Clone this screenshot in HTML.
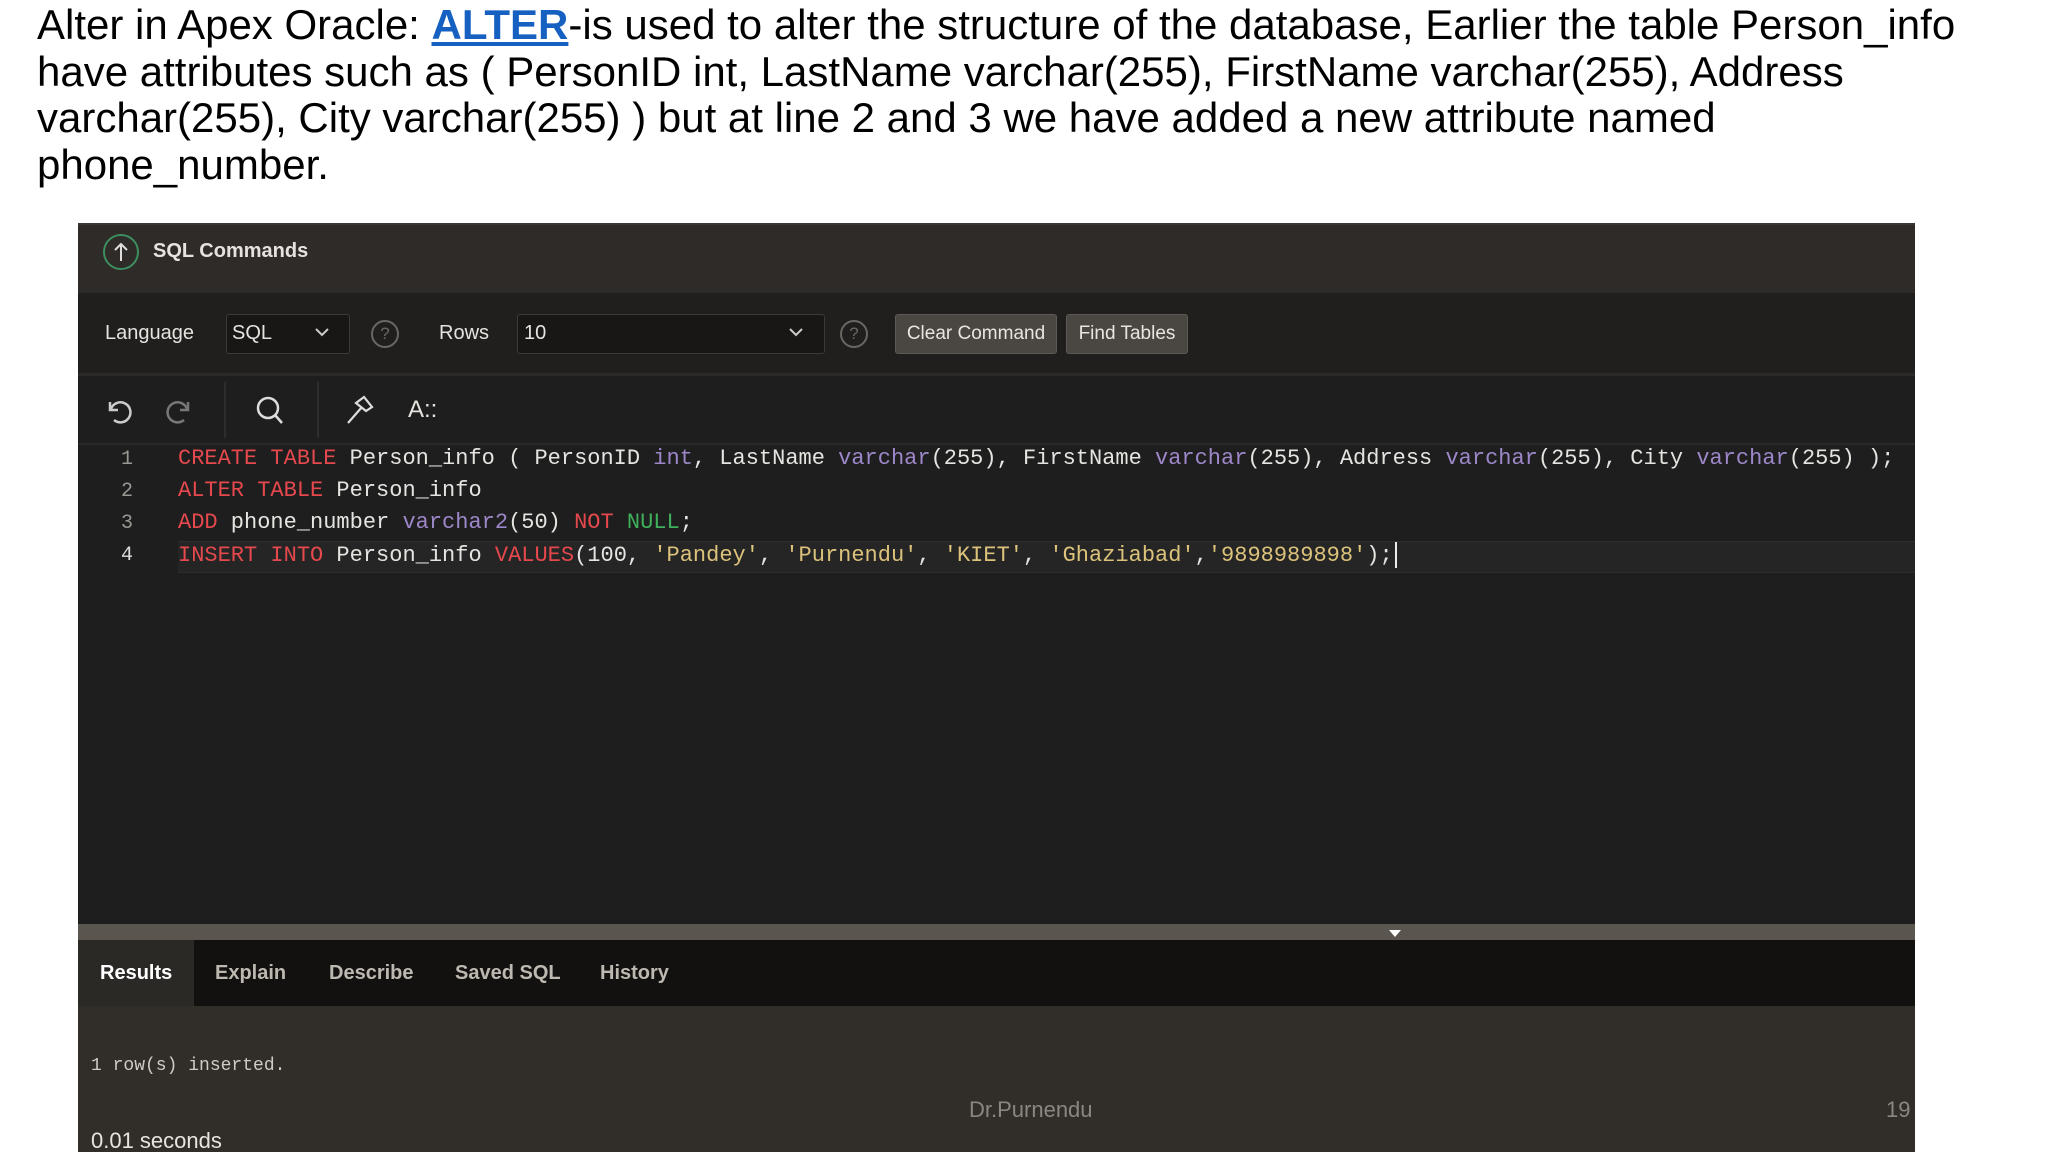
<!DOCTYPE html>
<html><head><meta charset="utf-8"><style>
*{margin:0;padding:0;box-sizing:border-box}
body{width:2048px;height:1152px;background:#fff;position:relative;overflow:hidden;font-family:"Liberation Sans",sans-serif}
.abs{position:absolute;white-space:nowrap}
#title{left:37px;top:2px;font-size:42px;line-height:46.5px;color:#000}
#title a{color:#1560c0;font-weight:bold;text-decoration:underline}
#panel{left:78px;top:223px;width:1837px;height:929px;background:#1e1e1e}
.code{font-family:"Liberation Mono",monospace;font-size:22px;letter-spacing:0;color:#e6e4e0}
.k{color:#e5484d}.t{color:#9d87c9}.s{color:#dcc27a}.g{color:#3faf5c}
.ln{font-family:"Liberation Mono",monospace;font-size:20px;color:#9a9893;width:40px;text-align:center}
.ui{font-size:20px;color:#e6e3df}
.btn{background:#4a4743;border:1px solid #5d5a55;border-radius:3px;color:#e8e5e1;font-size:19px;height:40px;line-height:38px;text-align:center}
.sel{background:#181716;border:1px solid #3c3a37;border-radius:3px;height:40px}
.tab{font-size:20px;font-weight:bold;color:#bdb8b0;top:962px}
</style></head><body>
<div class="abs" id="title">Alter in Apex Oracle: <a>ALTER</a>-is used to alter the structure of the database, Earlier the table Person_info<br>have attributes such as ( PersonID int, LastName varchar(255), FirstName varchar(255), Address<br>varchar(255), City varchar(255) ) but at line 2 and 3 we have added a new attribute named<br>phone_number.</div>
<div class="abs" id="panel"></div>
<div class="abs" style="left:78px;top:223px;width:1837px;height:70px;background:#2e2b28;border-top:2px solid #3a3733"></div>
<div class="abs" style="left:103px;top:234px;width:36px;height:36px;border:2px solid #3d8d5f;border-radius:50%"></div>
<svg class="abs" style="left:111px;top:240px" width="20" height="24"><path d="M10 21V4M4 10l6-6 6 6" stroke="#ddd" stroke-width="2" fill="none"/></svg>
<div class="abs ui" style="left:153px;top:240px;font-weight:bold;font-size:20px">SQL Commands</div>
<div class="abs" style="left:78px;top:293px;width:1837px;height:83px;background:#201f1e;border-bottom:3px solid #2c2a28"></div>
<div class="abs ui" style="left:105px;top:322px">Language</div>
<div class="abs sel" style="left:226px;top:314px;width:124px"></div>
<div class="abs ui" style="left:232px;top:322px">SQL</div>
<svg class="abs" style="left:314px;top:326px" width="16" height="12"><path d="M2 3l6 6 6-6" stroke="#ccc" stroke-width="2" fill="none"/></svg>
<div class="abs" style="left:371px;top:320px;width:28px;height:28px;border:2px solid #6a6762;border-radius:50%;color:#6a6762;font-size:17px;text-align:center;line-height:24px">?</div>
<div class="abs ui" style="left:439px;top:322px">Rows</div>
<div class="abs sel" style="left:517px;top:314px;width:308px"></div>
<div class="abs ui" style="left:524px;top:322px">10</div>
<svg class="abs" style="left:788px;top:326px" width="16" height="12"><path d="M2 3l6 6 6-6" stroke="#ccc" stroke-width="2" fill="none"/></svg>
<div class="abs" style="left:840px;top:320px;width:28px;height:28px;border:2px solid #6a6762;border-radius:50%;color:#6a6762;font-size:17px;text-align:center;line-height:24px">?</div>
<div class="abs btn" style="left:895px;top:314px;width:162px">Clear Command</div>
<div class="abs btn" style="left:1066px;top:314px;width:122px">Find Tables</div>
<div class="abs" style="left:78px;top:376px;width:1837px;height:69px;background:#1e1e1e;border-bottom:2px solid #2a2928"></div>
<svg class="abs" style="left:102px;top:394px" width="32" height="32"><path d="M8 8v8h8" stroke="#ccc" stroke-width="2.5" fill="none"/><path d="M9 15a10 10 0 1 1 3 11" stroke="#ccc" stroke-width="2.5" fill="none"/></svg>
<svg class="abs" style="left:164px;top:394px" width="32" height="32"><path d="M24 8v8h-8" stroke="#777" stroke-width="2.5" fill="none"/><path d="M23 15a10 10 0 1 0 -3 11" stroke="#777" stroke-width="2.5" fill="none"/></svg>
<div class="abs" style="left:224px;top:382px;width:2px;height:56px;background:#2e2d2b"></div>
<svg class="abs" style="left:254px;top:394px" width="32" height="34"><circle cx="14" cy="14" r="10" stroke="#ddd" stroke-width="2.5" fill="none"/><path d="M21 21l7 8" stroke="#ddd" stroke-width="2.5"/></svg>
<div class="abs" style="left:317px;top:382px;width:2px;height:56px;background:#2e2d2b"></div>
<svg class="abs" style="left:344px;top:393px" width="34" height="34"><path d="M4 30l14-16M12 10l8-6 8 10-6 4z" stroke="#ddd" stroke-width="2.2" fill="none"/></svg>
<div class="abs ui" style="left:408px;top:396px;font-size:24px">A::</div>
<div class="abs" style="left:178px;top:541px;width:1737px;height:32px;background:#252525;border-top:1px solid #2e2e2e;border-bottom:1px solid #2e2e2e"></div>
<div class="abs ln" style="left:107px;top:448px">1</div>
<div class="abs ln" style="left:107px;top:480px">2</div>
<div class="abs ln" style="left:107px;top:512px">3</div>
<div class="abs ln" style="left:107px;top:544px;color:#ddd">4</div>
<div class="abs code" style="left:178px;top:446px"><span class="k">CREATE TABLE</span> Person_info ( PersonID <span class="t">int</span>, LastName <span class="t">varchar</span>(255), FirstName <span class="t">varchar</span>(255), Address <span class="t">varchar</span>(255), City <span class="t">varchar</span>(255) );</div>
<div class="abs code" style="left:178px;top:478px"><span class="k">ALTER TABLE</span> Person_info</div>
<div class="abs code" style="left:178px;top:510px"><span class="k">ADD</span> phone_number <span class="t">varchar2</span>(50) <span class="k">NOT</span> <span class="g">NULL</span>;</div>
<div class="abs code" style="left:178px;top:542px"><span class="k">INSERT INTO</span> Person_info <span class="k">VALUES</span>(100, <span class="s">'Pandey'</span>, <span class="s">'Purnendu'</span>, <span class="s">'KIET'</span>, <span class="s">'Ghaziabad'</span>,<span class="s">'9898989898'</span>);<span style="display:inline-block;width:2px;height:26px;background:#eee;vertical-align:middle;margin-left:2px"></span></div>
<div class="abs" style="left:78px;top:924px;width:1837px;height:16px;background:#5a554f"></div>
<svg class="abs" style="left:1388px;top:929px" width="14" height="9"><path d="M1 1h12l-6 7z" fill="#fff"/></svg>
<div class="abs" style="left:78px;top:940px;width:1837px;height:66px;background:#121110"></div>
<div class="abs" style="left:78px;top:940px;width:116px;height:66px;background:#2b2926"></div>
<div class="abs tab" style="left:100px;color:#fff">Results</div>
<div class="abs tab" style="left:215px">Explain</div>
<div class="abs tab" style="left:329px">Describe</div>
<div class="abs tab" style="left:455px">Saved SQL</div>
<div class="abs tab" style="left:600px">History</div>
<div class="abs" style="left:78px;top:1006px;width:1837px;height:146px;background:#312d29"></div>
<div class="abs" style="left:91px;top:1056px;font-family:'Liberation Mono',monospace;font-size:18px;color:#cfcbc5">1 row(s) inserted.</div>
<div class="abs" style="left:969px;top:1097px;font-size:22px;color:#8a8680">Dr.Purnendu</div>
<div class="abs" style="left:1886px;top:1097px;font-size:22px;color:#8a8680">19</div>
<div class="abs" style="left:91px;top:1128px;font-size:22px;color:#e8e4de">0.01 seconds</div>
</body></html>
